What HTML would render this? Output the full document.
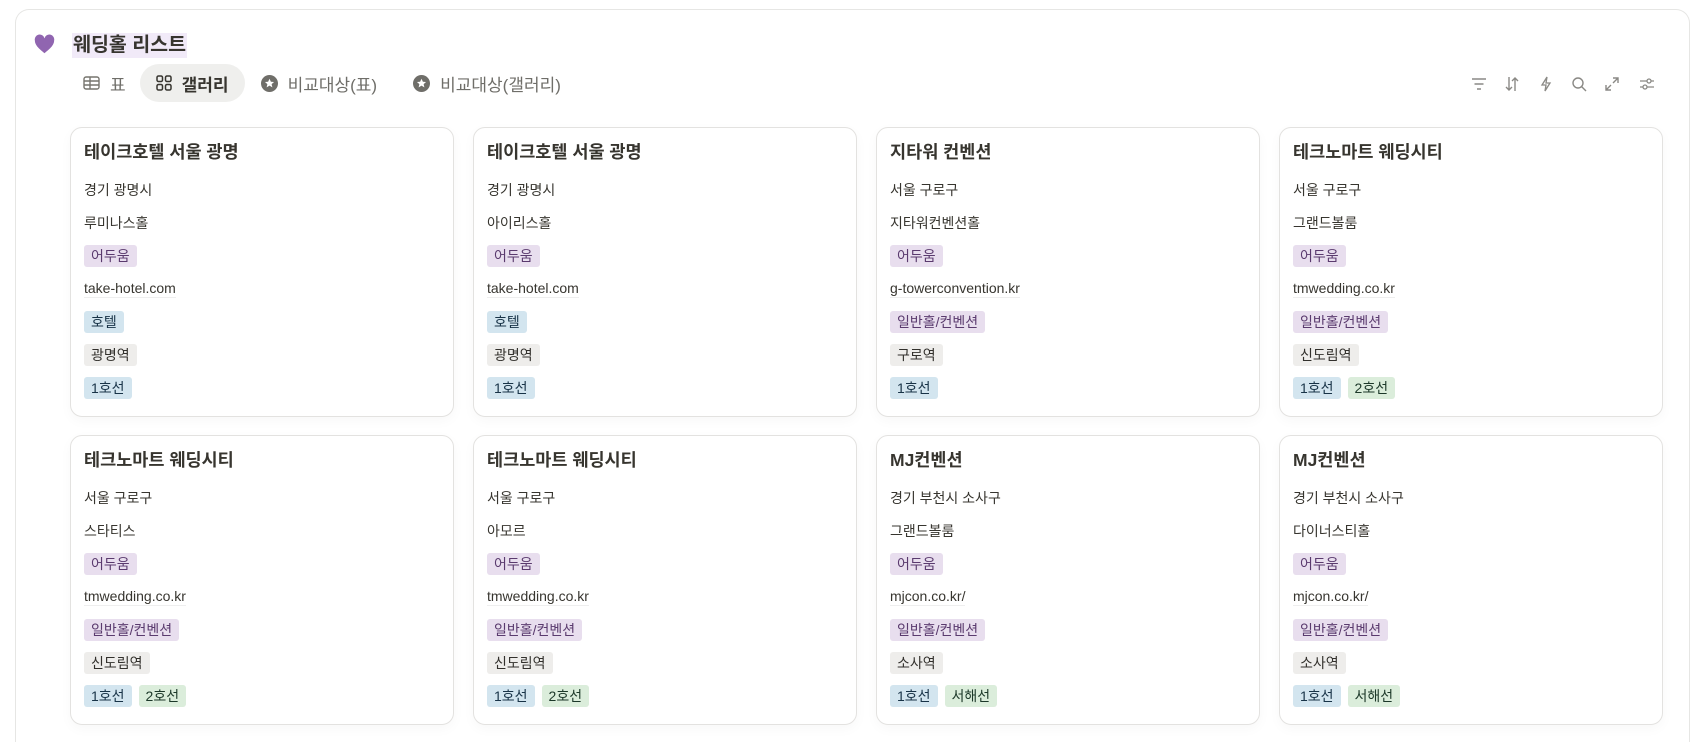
<!DOCTYPE html>
<html><head><meta charset="utf-8"><style>
*{box-sizing:border-box;margin:0;padding:0}
html{height:742px;overflow:hidden}
body{width:1700px;height:742px;overflow:hidden;background:#fff;font-family:"Liberation Sans","Noto Sans CJK KR",sans-serif;color:#37352f;position:relative}
.outer{position:absolute;left:15px;top:9px;width:1675px;height:733px;border:1px solid #e6e6e4;border-bottom:none;border-radius:14px 14px 0 0}
.title{position:absolute;left:72px;top:33px;font-size:19.5px;font-weight:bold;background:#f1eaf8;padding:0 1px;line-height:25px}
.heart{position:absolute;left:34px;top:34px}
.tabs{position:absolute;top:64px;left:69px;height:38px;display:flex;align-items:center;font-size:17px;color:#6f6e69}
.tab{display:flex;align-items:center;gap:10px;padding:0 14px;height:38px;border-radius:19px}
.tab.act{background:#efefed;color:#37352f;font-weight:bold;padding:0 16px}
.icons{position:absolute;top:76px;left:1471px}
.icons svg{position:absolute;top:0}
.card{position:absolute;width:384px;height:290px;border:1px solid #e3e2e0;border-radius:12px;box-shadow:0 4px 12px rgba(0,0,0,.03);padding:12px 13px}
.card h3{font-size:17.5px;font-weight:bold;line-height:24px;margin-bottom:9px}
.row{height:33px;display:flex;align-items:center;gap:7px;font-size:14px;line-height:20px}
.url{border-bottom:1px solid #eee;line-height:17px}
.t{display:inline-block;height:22px;line-height:22px;padding:0 7px;border-radius:3px;font-size:14px}
.p{background:#e8deee;color:#5a3a6e}.b{background:#d3e5ef;color:#183347}.g{background:#eeedeb;color:#32302c}.gr{background:#dbeddb;color:#1c3829}
</style></head><body>
<div class="outer"></div>
<svg class="heart" width="21" height="21" viewBox="0 0 24 24"><path d="M12 22 C9 19 1 14 1 7.5 A5.5 5.5 0 0 1 12 5 A5.5 5.5 0 0 1 23 7.5 C23 14 15 19 12 22Z" fill="#9065b0"/></svg>
<div class="title">웨딩홀 리스트</div>
<div class="tabs">
<div class="tab"><svg width="17" height="14" viewBox="0 0 17 14"><rect x="1" y="1" width="15" height="12" rx="2" fill="none" stroke="#77756f" stroke-width="1.4"/><path d="M1 5h15M1 9h15M7 1v12" stroke="#77756f" stroke-width="1.4"/></svg>표</div>
<div class="tab act"><svg width="16" height="16" viewBox="0 0 16 16" fill="none" stroke="#37352f" stroke-width="1.5"><rect x="1" y="1" width="5.5" height="5.5" rx="1.5"/><rect x="9.5" y="1" width="5.5" height="5.5" rx="1.5"/><rect x="1" y="9.5" width="5.5" height="5.5" rx="1.5"/><rect x="9.5" y="9.5" width="5.5" height="5.5" rx="1.5"/></svg>갤러리</div>
<div class="tab" style="margin-left:2px"><svg width="17" height="17" viewBox="0 0 16 16"><circle cx="8" cy="8" r="8" fill="#6f6e69"/><path d="M8 3.5l1.3 2.8 3 .3-2.3 2 .7 3L8 10l-2.7 1.6.7-3-2.3-2 3-.3z" fill="#fff"/></svg>비교대상(표)</div>
<div class="tab" style="margin-left:8px"><svg width="17" height="17" viewBox="0 0 16 16"><circle cx="8" cy="8" r="8" fill="#6f6e69"/><path d="M8 3.5l1.3 2.8 3 .3-2.3 2 .7 3L8 10l-2.7 1.6.7-3-2.3-2 3-.3z" fill="#fff"/></svg>비교대상(갤러리)</div>
</div>
<div class="icons">
<svg style="left:0" width="16" height="16" viewBox="0 0 16 16" stroke="#8a8985" stroke-width="1.4" fill="none"><path d="M1 3h14M3.5 8h9M6 13h4"/></svg>
<svg style="left:33px" width="16" height="16" viewBox="0 0 16 16" stroke="#8a8985" stroke-width="1.4" fill="none"><path d="M5 1v13M2 11l3 3 3-3M11 15V2M8 5l3-3 3 3"/></svg>
<svg style="left:67px" width="16" height="16" viewBox="0 0 16 16" stroke="#8a8985" stroke-width="1.3" fill="none"><path d="M9 1L4 9h4l-1 6 5-8H8z"/></svg>
<svg style="left:100px" width="16" height="16" viewBox="0 0 16 16" stroke="#8a8985" stroke-width="1.4" fill="none"><circle cx="7" cy="7" r="5"/><path d="M10.5 10.5L15 15"/></svg>
<svg style="left:133px" width="16" height="16" viewBox="0 0 16 16" stroke="#8a8985" stroke-width="1.4" fill="none"><path d="M2 14l5-5M2 9v5h5M14 2l-5 5M9 2h5v5"/></svg>
<svg style="left:168px" width="16" height="16" viewBox="0 0 16 16" stroke="#8a8985" stroke-width="1.3" fill="none"><path d="M1 5h14M1 11h14"/><circle cx="10" cy="5" r="2" fill="#fff"/><circle cx="6" cy="11" r="2" fill="#fff"/></svg>
</div>

<div class="card" style="left:70px;top:127px"><h3>테이크호텔 서울 광명</h3><div class="row">경기 광명시</div><div class="row">루미나스홀</div><div class="row"><span class="t p">어두움</span></div><div class="row"><span class="url">take-hotel.com</span></div><div class="row"><span class="t b">호텔</span></div><div class="row"><span class="t g">광명역</span></div><div class="row"><span class="t b">1호선</span></div></div>
<div class="card" style="left:473px;top:127px"><h3>테이크호텔 서울 광명</h3><div class="row">경기 광명시</div><div class="row">아이리스홀</div><div class="row"><span class="t p">어두움</span></div><div class="row"><span class="url">take-hotel.com</span></div><div class="row"><span class="t b">호텔</span></div><div class="row"><span class="t g">광명역</span></div><div class="row"><span class="t b">1호선</span></div></div>
<div class="card" style="left:876px;top:127px"><h3>지타워 컨벤션</h3><div class="row">서울 구로구</div><div class="row">지타워컨벤션홀</div><div class="row"><span class="t p">어두움</span></div><div class="row"><span class="url">g-towerconvention.kr</span></div><div class="row"><span class="t p">일반홀/컨벤션</span></div><div class="row"><span class="t g">구로역</span></div><div class="row"><span class="t b">1호선</span></div></div>
<div class="card" style="left:1279px;top:127px"><h3>테크노마트 웨딩시티</h3><div class="row">서울 구로구</div><div class="row">그랜드볼룸</div><div class="row"><span class="t p">어두움</span></div><div class="row"><span class="url">tmwedding.co.kr</span></div><div class="row"><span class="t p">일반홀/컨벤션</span></div><div class="row"><span class="t g">신도림역</span></div><div class="row"><span class="t b">1호선</span><span class="t gr">2호선</span></div></div>

<div class="card" style="left:70px;top:435px"><h3>테크노마트 웨딩시티</h3><div class="row">서울 구로구</div><div class="row">스타티스</div><div class="row"><span class="t p">어두움</span></div><div class="row"><span class="url">tmwedding.co.kr</span></div><div class="row"><span class="t p">일반홀/컨벤션</span></div><div class="row"><span class="t g">신도림역</span></div><div class="row"><span class="t b">1호선</span><span class="t gr">2호선</span></div></div>
<div class="card" style="left:473px;top:435px"><h3>테크노마트 웨딩시티</h3><div class="row">서울 구로구</div><div class="row">아모르</div><div class="row"><span class="t p">어두움</span></div><div class="row"><span class="url">tmwedding.co.kr</span></div><div class="row"><span class="t p">일반홀/컨벤션</span></div><div class="row"><span class="t g">신도림역</span></div><div class="row"><span class="t b">1호선</span><span class="t gr">2호선</span></div></div>
<div class="card" style="left:876px;top:435px"><h3>MJ컨벤션</h3><div class="row">경기 부천시 소사구</div><div class="row">그랜드볼룸</div><div class="row"><span class="t p">어두움</span></div><div class="row"><span class="url">mjcon.co.kr/</span></div><div class="row"><span class="t p">일반홀/컨벤션</span></div><div class="row"><span class="t g">소사역</span></div><div class="row"><span class="t b">1호선</span><span class="t gr">서해선</span></div></div>
<div class="card" style="left:1279px;top:435px"><h3>MJ컨벤션</h3><div class="row">경기 부천시 소사구</div><div class="row">다이너스티홀</div><div class="row"><span class="t p">어두움</span></div><div class="row"><span class="url">mjcon.co.kr/</span></div><div class="row"><span class="t p">일반홀/컨벤션</span></div><div class="row"><span class="t g">소사역</span></div><div class="row"><span class="t b">1호선</span><span class="t gr">서해선</span></div></div>
</body></html>
